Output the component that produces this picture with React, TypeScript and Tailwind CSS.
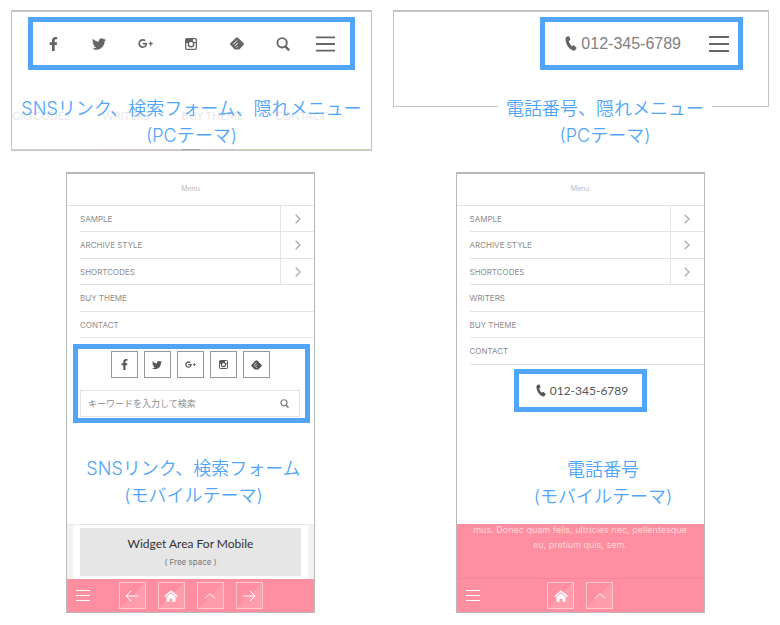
import React from 'react';
import { FaFacebookF, FaTwitter, FaGooglePlusG } from 'react-icons/fa';

const Instagram = ({ className = '' }: { className?: string }) => (
  <svg viewBox="0 0 24 24" className={className} fill="none" stroke="currentColor" aria-hidden="true">
    <rect x="1.300" y="1.300" width="21.400" height="21.400" rx="2" strokeWidth="2.600" />
    <path d="M2 2h14v6h6v2H2Z" fill="currentColor" stroke="none" />
    <circle cx="12" cy="12" r="5.500" fill="white" strokeWidth="3" />
  </svg>
);

const Feedly = ({ className = '' }: { className?: string }) => (
  <svg viewBox="0 0 28 26" className={className} aria-hidden="true">
    <path
      d="M12 1.400a3 3 0 0 1 4 0l11 10.800a3 3 0 0 1 0 4L19.500 24a3 3 0 0 1-2 .8h-7a3 3 0 0 1-2-.8L1 16.200a3 3 0 0 1 0-4Z"
      fill="currentColor"
    />
    <path d="m6.500 14.500 7.500-7.500M9.500 18l6-6M12.500 21l2.500-2.500" stroke="white" strokeWidth="2" />
  </svg>
);

const Search = ({ className = '' }: { className?: string }) => (
  <svg viewBox="0 0 24 24" className={className} fill="none" stroke="currentColor" aria-hidden="true">
    <circle cx="10.500" cy="10" r="8" strokeWidth="3.200" />
    <path d="m16 16 6.500 7" strokeWidth="4" />
  </svg>
);

const Phone = ({ className = '' }: { className?: string }) => (
  <svg viewBox="0 0 24 30" className={className} fill="currentColor" aria-hidden="true">
    <path d="M4.500 1.200 7.200.4c.8-.2 1.300.1 1.600.9l1.800 5.600c.2.800 0 1.300-.7 1.700L7.600 10c1 4 3.200 7.600 6.400 10.400l2.400-1.700c.6-.4 1.200-.4 1.700.1l4.600 4.100c.6.5.7 1.100.2 1.800l-2 2.900c-1.300 1.900-3.700 2.200-6.200 1C7.500 25 2 17.300 1.100 8.600.7 4.800 1.800 2.100 4.500 1.200Z" />
  </svg>
);

const Bars = ({ className = '' }: { className?: string }) => (
  <svg viewBox="0 0 20 16" className={className} stroke="currentColor" strokeWidth="2" aria-hidden="true">
    <path d="M0 1h20M0 8h20M0 15h20" />
  </svg>
);

const Home = () => (
  <svg viewBox="0 0 14 12" className="h-3 w-3.5" aria-hidden="true">
    <path d="M.7 6.600 7 1.200l6.300 5.400" fill="none" stroke="white" strokeWidth="1.500" />
    <path d="M2.500 7 7 3.300 11.500 7v4.700H8.400V8.500H5.600v3.200H2.500Z" fill="white" />
  </svg>
);

const Line = ({ d }: { d: string }) => (
  <svg viewBox="0 0 14 14" className="size-3.5" fill="none" stroke="white" strokeWidth="1" aria-hidden="true">
    <path d={d} />
  </svg>
);

const social = [
  { name: 'Facebook', big: <FaFacebookF className="h-3.5 w-[9px]" />, small: <FaFacebookF className="h-[11px] w-[7px]" /> },
  { name: 'Twitter', big: <FaTwitter className="size-3.5" />, small: <FaTwitter className="size-2.5" /> },
  { name: 'Google+', big: <FaGooglePlusG className="size-[15px]" />, small: <FaGooglePlusG className="size-[11px]" /> },
  { name: 'Instagram', big: <Instagram className="size-3" />, small: <Instagram className="size-[9px]" /> },
  { name: 'Feedly', big: <Feedly className="h-[13px] w-3.5" />, small: <Feedly className="h-2.5 w-[11px]" /> },
];

const Caption = ({ lines, className = '' }: { lines: string[]; className?: string }) => (
  <h2
    className={`text-center font-[Inter,'Noto_Sans_CJK_JP',sans-serif] text-[18px] leading-[27px] font-[350] text-[#50a5f9] ${className}`}
  >
    {lines.map((line) => (
      <span key={line} className="block whitespace-nowrap">
        {line}
      </span>
    ))}
  </h2>
);

const MobileMenu = ({ items }: { items: string[] }) => (
  <>
    <header className="flex h-8 items-center justify-center border-b border-[#e4e4e4] font-[Inter,sans-serif] text-[7px] text-[#bbb]">
      Menu
    </header>
    <ul className="pl-[13px]">
      {items.map((item, i) => (
        <li key={item} className="box-content flex h-[26px] items-stretch border-b border-[#e4e4e4] odd:h-[25px]">
          <a href="#" className="flex flex-1 items-center font-[Inter,sans-serif] text-[8px] text-[#8c8c8c]">
            {item}
          </a>
          {i < 3 && (
            <button aria-label={`Open ${item}`} className="flex w-[34px] items-center justify-center border-l border-[#e4e4e4]">
              <svg viewBox="0 0 6 10" className="h-2.5 w-1.5" fill="none" stroke="#aaa" strokeWidth="1.300">
                <path d="m.7.700 4.300 4.300L.7 9.300" />
              </svg>
            </button>
          )}
        </li>
      ))}
    </ul>
  </>
);

const BarButton = ({ label, children }: { label: string; children: React.ReactNode }) => (
  <button
    aria-label={label}
    className="flex size-[27px] items-center justify-center border border-[#ffc9d0] bg-linear-135 from-[#ff8fa0] from-50% to-[#ff9dac] to-50%"
  >
    {children}
  </button>
);

const BottomBar = ({ arrows }: { arrows: boolean }) => (
  <nav className="relative flex h-[33px] items-center justify-center gap-3 bg-[#ff8fa0]">
    <button aria-label="Menu" className="absolute left-[9px] text-white">
      <svg viewBox="0 0 14 11" className="h-[11px] w-3.5" stroke="white" aria-hidden="true">
        <path d="M0 .5h14M0 5.500h14M0 10.500h14" />
      </svg>
    </button>
    {arrows && (
      <BarButton label="Back">
        <Line d="M13 7H1m5-5L1 7l5 5" />
      </BarButton>
    )}
    <BarButton label="Home">
      <Home />
    </BarButton>
    <BarButton label="Top">
      <Line d="m2 9.500 5-5 5 5" />
    </BarButton>
    {arrows && (
      <BarButton label="Forward">
        <Line d="M1 7h12M8 2l5 5-5 5" />
      </BarButton>
    )}
  </nav>
);

const phoneFrame = 'mr-0.5 flex w-[249px] min-h-[441px] flex-col justify-self-center border border-t-2 border-[#b9b9b9]';

export default function App() {
  return (
    <main className="grid grid-cols-[361fr_376fr] gap-[21px] bg-white px-[11px] py-2.5 font-[Lato,'Noto_Sans_CJK_JP',sans-serif]">
      <section className="relative flex min-h-[141px] flex-col items-center overflow-hidden border border-t-2 border-[#c4c4c4] pt-[5px]">
        <div className="flex h-[53px] w-[327px] items-center gap-2 border-[5px] border-[#50a5f9] pl-px text-[#666]">
          {social.map((s) => (
            <a key={s.name} href="#" aria-label={s.name} className="flex w-[38px] justify-center">
              {s.big}
            </a>
          ))}
          <button aria-label="Search" className="flex w-[38px] justify-center">
            <Search className="size-3.5" />
          </button>
          <button aria-label="Menu" className="flex w-[30px] justify-center">
            <Bars className="h-4 w-[19px]" />
          </button>
        </div>
        <nav aria-hidden="true" className="absolute top-24 left-0 flex gap-8 text-[11px] text-[#e9e9e9]">
          <span>ORTCODES</span>
          <span>WRITERS</span>
          <span>BUY THEME</span>
          <span>CONTACT</span>
        </nav>
        <Caption className="relative mt-[25px]" lines={['SNSリンク、検索フォーム、隠れメニュー', '(PCテーマ)']} />
        <div className="absolute inset-x-0 bottom-0 flex h-px">
          <span className="w-[90px] bg-[#ddd0cc]" />
          <span className="w-[80px] bg-[#d5c3d3]" />
          <span className="w-[18px] bg-[#a9a9a9]" />
          <span className="w-[35px] bg-[#d5c3d3]" />
          <span className="flex-1 bg-[#c3d9ae]" />
        </div>
      </section>

      <section className="flex flex-col items-end">
        <div className="h-[97px] w-full border border-t-2 border-[#c4c4c4] pt-[5px]">
          <div className="mr-[25px] ml-auto flex h-[53px] w-[203px] items-center justify-end border-[5px] border-[#50a5f9] pr-[9px] text-[#666]">
            <a
              href="#"
              className="mr-7 flex items-center gap-1 font-['Liberation_Sans',Arial,sans-serif] text-base text-[#808080]"
            >
              <Phone className="h-[15px] w-3 text-[#666]" />
              012-345-6789
            </a>
            <button aria-label="Menu">
              <Bars className="h-4 w-5" />
            </button>
          </div>
        </div>
        <Caption className="relative -mt-3 mr-[57px] bg-white px-2" lines={['電話番号、隠れメニュー', '(PCテーマ)']} />
      </section>

      <section className={phoneFrame}>
        <MobileMenu items={['SAMPLE', 'ARCHIVE STYLE', 'SHORTCODES', 'BUY THEME', 'CONTACT']} />
        <div className="mt-1.5 ml-1.5 w-[237px] border-[5px] border-[#50a5f9] pt-0.5 pr-[5px] pb-px pl-0.5">
          <div className="flex justify-center gap-1.5 text-[#555]">
            {social.map((s) => (
              <a key={s.name} href="#" aria-label={s.name} className="flex size-[27px] items-center justify-center border border-[#999]">
                {s.small}
              </a>
            ))}
          </div>
          <form className="mt-3 flex h-[27px] items-center border border-[#e2e2e2] pr-2.5 pl-[7px]">
            <input
              aria-label="キーワードを入力して検索"
              placeholder="キーワードを入力して検索"
              className="min-w-0 flex-1 text-[9px] outline-none placeholder:text-[#8c8c8c]"
            />
            <button type="button" aria-label="Search" className="text-[#777]">
              <Search className="size-[9px]" />
            </button>
          </form>
        </div>
        <Caption className="mt-8 pl-1.5" lines={['SNSリンク、検索フォーム', '(モバイルテーマ)']} />
        <div className="mt-auto border-t border-[#e8e8e8] bg-[#f2f2f2] px-1.5">
          <div className="bg-white px-[7px] py-[3px]">
            <div className="flex h-12 flex-col items-center justify-center bg-[#e6e6e6]">
              <h3 className="text-xs leading-4 text-[#333]">Widget Area For Mobile</h3>
              <p className="mt-1 font-[Inter,sans-serif] text-[8px] leading-3 text-[#777]">( Free space )</p>
            </div>
          </div>
        </div>
        <BottomBar arrows />
      </section>

      <section className={phoneFrame}>
        <MobileMenu items={['SAMPLE', 'ARCHIVE STYLE', 'SHORTCODES', 'WRITERS', 'BUY THEME', 'CONTACT']} />
        <div className="mt-1 flex h-[43px] w-[133px] items-center justify-center self-center border-[5px] border-[#50a5f9] pl-1 text-[#555]">
          <a href="#" className="flex items-center gap-1 text-xs">
            <Phone className="h-[13px] w-2.5" />
            012-345-6789
          </a>
        </div>
        <Caption className="mt-11 pl-[46px]" lines={['電話番号', '(モバイルテーマ)']} />
        <div className="mt-auto h-[55px] border-b border-[#f58798] bg-[#ff8fa0]">
          <p className="-mt-0.5 text-center font-[Inter,sans-serif] text-[9px] leading-[15px] text-[#ffd5da]">
            mus. Donec quam felis, ultricies nec, pellentesque
            <br />
            eu, pretium quis, sem.
          </p>
        </div>
        <BottomBar arrows={false} />
      </section>
    </main>
  );
}
